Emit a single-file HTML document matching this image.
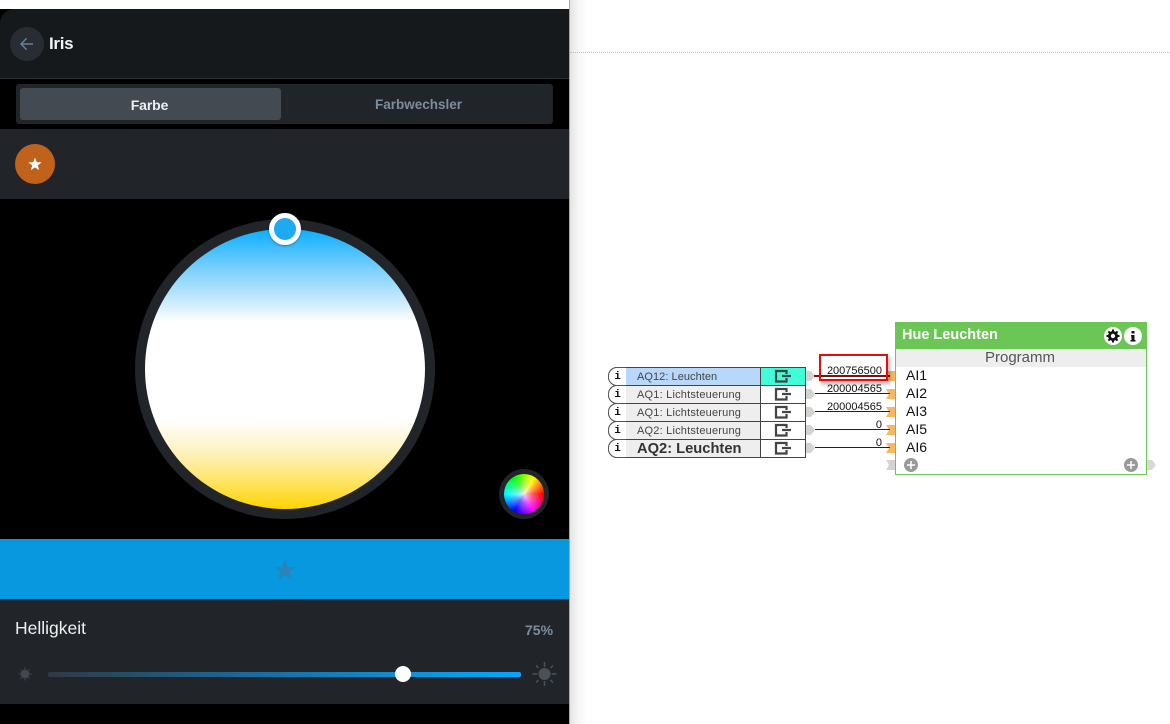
<!DOCTYPE html>
<html><head><meta charset="utf-8"><style>
html,body{margin:0;padding:0;width:1170px;height:724px;overflow:hidden;background:#fff;font-family:"Liberation Sans",sans-serif}
.a{position:absolute}
.t{position:absolute;white-space:nowrap;line-height:1}
.row{position:absolute;left:608px;width:197px;height:17px;border:1px solid #444;border-left:none;border-radius:9px 0 0 9px;background:#fff;box-sizing:content-box}
.row .cap{position:absolute;left:0;top:-1px;width:17px;height:17px;border:1px solid #555;border-right:none;border-radius:9px 0 0 9px;background:#fff;text-align:center;font:bold 11px/18px "Liberation Mono",monospace;color:#111}
.row .name{position:absolute;left:18px;top:0;width:135px;height:17px;background:#eee;border-right:1px solid #444;font:11px/18px "Liberation Sans",sans-serif;color:#444;padding-left:11px;box-sizing:border-box;letter-spacing:.2px;white-space:nowrap}
.val{position:absolute;font:11px/11px "Liberation Sans",sans-serif;color:#111;text-align:right;width:70px;left:812px}
.ai{position:absolute;left:906px;font:14px/14px "Liberation Sans",sans-serif;color:#111}
</style></head><body>
<!-- right shadow -->
<div class="a" style="left:570px;top:0;width:18px;height:724px;background:linear-gradient(90deg,#e4e4e4,#f7f7f7 50%,#fff)"></div>
<div class="a" style="left:569px;top:0;width:1px;height:724px;background:#a8a8a8"></div>
<div class="a" style="left:570px;top:52px;width:600px;height:0;border-top:1px dotted #bbb"></div>

<!-- panel -->
<div class="a" style="left:0;top:9px;width:569px;height:715px;background:#000;overflow:hidden">
  <div class="a" style="left:0;top:0;width:569px;height:69px;background:#16191c;border-top-left-radius:14px"></div>
  <div class="a" style="left:0;top:69px;width:569px;height:1px;background:#2b3035"></div>
  <div class="a" style="left:16px;top:75px;width:537px;height:40px;background:#212429;border-radius:3px"></div>
  <div class="a" style="left:20px;top:79px;width:261px;height:32px;background:#434a52;border-radius:3px"></div>
  <div class="a" style="left:0;top:120px;width:569px;height:70px;background:#212429"></div>
  <div class="a" style="left:0;top:530px;width:569px;height:60px;background:#0798e0"></div>
  <div class="a" style="left:0;top:590px;width:569px;height:105px;background:#212429"></div>
</div>
<div class="a" style="left:10px;top:27px;width:34px;height:34px;border-radius:50%;background:#282d33"></div>
<svg class="a" style="left:18px;top:35px" width="18" height="18" viewBox="0 0 18 18"><path d="M15 9H3.500M8.700 3.300L3 9l5.700 5.700" fill="none" stroke="#6b7f96" stroke-width="1.400"/></svg>
<div class="t" style="left:49px;top:35px;font-size:17px;font-weight:bold;color:#f2f3f4;letter-spacing:-.3px">Iris</div>
<div class="t" style="left:19px;width:261px;top:98px;text-align:center;font-size:14px;font-weight:bold;color:#eceef0;letter-spacing:-.1px">Farbe</div>
<div class="t" style="left:375px;top:98px;font-size:13.500px;font-weight:bold;color:#7f8c9b;">Farbwechsler</div>

<div class="a" style="left:15px;top:144px;width:40px;height:40px;border-radius:50%;background:#c1621b"></div>
<svg class="a" style="left:27px;top:156px" width="16" height="16" viewBox="0 0 16 16"><path d="M8 1.500L9.700 6.150 14.660 6.340 10.760 9.400 12.110 14.160 8 11.400 3.890 14.160 5.240 9.400 1.340 6.340 6.300 6.150z" fill="#fff"/></svg>

<!-- colour disc -->
<div class="a" style="left:135px;top:219px;width:300px;height:300px;border-radius:50%;background:#212429"></div>
<div class="a" style="left:145px;top:229px;width:280px;height:280px;border-radius:50%;background:linear-gradient(180deg,#0aaeff 0,#7fd1fc 15%,#d8f0fd 28%,#fff 33%,#fff 68%,#fdf2bd 80%,#fee35c 91%,#ffd400 100%)"></div>
<div class="a" style="left:269px;top:213px;width:32px;height:32px;box-sizing:border-box;border:5px solid #fff;border-radius:50%;background:#1ea9f0;box-shadow:0 1px 2px rgba(0,0,0,.35)"></div>

<!-- wheel -->
<div class="a" style="left:499px;top:469px;width:50px;height:50px;border-radius:50%;background:#212429"></div>
<div class="a" style="left:504px;top:474px;width:40px;height:40px;border-radius:50%;background:radial-gradient(circle,rgba(255,255,255,.85) 0,rgba(255,255,255,.35) 30%,rgba(255,255,255,0) 65%),conic-gradient(from 30deg,#ff0 0deg,#f00 60deg,#f0f 120deg,#00f 180deg,#0ff 240deg,#0f0 300deg,#ff0 360deg)"></div>

<!-- blue bar star -->
<svg class="a" style="left:273px;top:558px;filter:blur(.3px)" width="24" height="24" viewBox="0 0 24 24"><path d="M12 1.500L14.900 9 22.500 9.300 16.500 14 18.600 21.500 12 17.300 5.400 21.500 7.500 14 1.500 9.300 9.100 9z" fill="#2b83ba"/></svg>

<!-- brightness -->
<div class="t" style="left:15px;top:620px;font-size:17.500px;color:#eef0f2;">Helligkeit</div>
<div class="t" style="left:525px;top:623px;font-size:14px;font-weight:bold;color:#7f8c9b;">75%</div>
<div class="a" style="left:48px;top:672px;width:473px;height:5px;border-radius:2px;background:linear-gradient(90deg,#2f3a43 0,#1a6d9f 45%,#0a9be8 85%,#05a6ff 100%)"></div>
<div class="a" style="left:395px;top:666px;width:16px;height:16px;border-radius:50%;background:#fff"></div>
<svg class="a" style="left:15px;top:664px" width="20" height="20" viewBox="0 0 20 20"><circle cx="10" cy="10" r="4.500" fill="#414850"/><path d="M10 3.500V5M10 15V16.500M3.500 10H5M15 10H16.500M5.400 5.400L6.400 6.400M13.600 13.600L14.600 14.600M5.400 14.600L6.400 13.600M13.600 6.400L14.600 5.400" stroke="#414850" stroke-width="1.200"/></svg>
<svg class="a" style="left:530px;top:660px" width="28" height="28" viewBox="0 0 28 28"><circle cx="14.500" cy="14" r="6" fill="#4b5159"/><path d="M14.500 2V7M14.500 21V26M2.500 14H7.500M21.500 14H26.500M6 5.500L8.500 8M20.500 20L23 22.500M6 22.500L8.500 20M20.500 8L23 5.500" stroke="#4b5159" stroke-width="1.500"/></svg>

<!-- logic rows -->
<div class="row" style="top:367px"><div class="name" style="background:#b8d8fb;letter-spacing:.05px">AQ12: Leuchten</div><div class="a" style="left:153px;top:0;width:44px;height:17px;background:#3fffd8"></div><div class="cap">i</div></div>
<div class="row" style="top:385px"><div class="name">AQ1: Lichtsteuerung</div><div class="cap">i</div></div>
<div class="row" style="top:403px"><div class="name">AQ1: Lichtsteuerung</div><div class="cap">i</div></div>
<div class="row" style="top:421px"><div class="name">AQ2: Lichtsteuerung</div><div class="cap">i</div></div>
<div class="row" style="top:439px"><div class="name" style="font:bold 14.700px/18px 'Liberation Sans',sans-serif;color:#333;letter-spacing:0">AQ2: Leuchten</div><div class="cap">i</div></div>

<svg class="a" style="left:600px;top:350px" width="310" height="125" viewBox="600 350 310 125">
  <g fill="none" stroke="#444" stroke-width="2.200">
    <path d="M786.500 374V371H776V381.500H786.500V378M782 376H791"/>
    <path d="M786.500 392V389H776V399.500H786.500V396M782 394H791"/>
    <path d="M786.500 410V407H776V417.500H786.500V414M782 412H791"/>
    <path d="M786.500 428V425H776V435.500H786.500V432M782 430H791"/>
    <path d="M786.500 446V443H776V453.500H786.500V450M782 448H791"/>
  </g>
  <g fill="#d3d3cf">
    <path d="M806 371h5l4 5-4 5h-5z"/><path d="M806 389h5l4 5-4 5h-5z"/><path d="M806 407h5l4 5-4 5h-5z"/><path d="M806 425h5l4 5-4 5h-5z"/><path d="M806 443h5l4 5-4 5h-5z"/>
  </g>
  <g fill="#fbb760">
    <path d="M886 371h9v10h-9l3-5z"/><path d="M886 389h9v10h-9l3-5z"/><path d="M886 407h9v10h-9l3-5z"/><path d="M886 425h9v10h-9l3-5z"/><path d="M886 443h9v10h-9l3-5z"/>
  </g>
  <path d="M886 460h9v10h-9l3-5z" fill="#d3d3cf"/>
  <path d="M814 376H890" stroke="#7a1010" stroke-width="2"/>
  <g stroke="#700000" stroke-width="1">
    <path d="M815 393.500H890M815 411.500H890M815 429.500H890M815 447.500H890"/>
  </g>
</svg>
<div class="val" style="top:366px">200756500</div>
<div class="val" style="top:384px">200004565</div>
<div class="val" style="top:402px">200004565</div>
<div class="val" style="top:420px">0</div>
<div class="val" style="top:438px">0</div>
<div class="a" style="left:819px;top:354px;width:69px;height:27px;box-sizing:border-box;border:2px solid #e30d0d;box-shadow:2px 3px 4px rgba(0,0,0,.3)"></div>

<!-- block -->
<div class="a" style="left:895px;top:322px;width:252px;height:153px;box-sizing:border-box;border:1px solid #6cc655;background:#fff"></div>
<div class="a" style="left:895px;top:322px;width:252px;height:27px;background:#6cc655"></div>
<div class="t" style="left:902px;top:328px;font-size:14.500px;font-weight:bold;color:#fff;">Hue Leuchten</div>
<div class="a" style="left:896px;top:349px;width:250px;height:18px;background:#eee"></div>
<div class="t" style="left:895px;width:250px;text-align:center;top:350px;font-size:15px;color:#555;">Programm</div>
<div class="ai" style="top:368px">AI1</div>
<div class="ai" style="top:386px">AI2</div>
<div class="ai" style="top:404px">AI3</div>
<div class="ai" style="top:422px">AI5</div>
<div class="ai" style="top:440px">AI6</div>
<svg class="a" style="left:1100px;top:325px" width="60" height="150" viewBox="1100 325 60 150">
  <circle cx="1113" cy="336" r="9" fill="#fff"/>
  <circle cx="1113" cy="336" r="3.500" fill="none" stroke="#111" stroke-width="3"/>
  <path d="M1113 329.500v13M1106.500 336h13M1108.400 331.400l9.200 9.200M1108.400 340.600l9.200-9.200" stroke="#111" stroke-width="2"/>
  <circle cx="1113" cy="336" r="2.200" fill="#fff"/>
  <circle cx="1133" cy="336" r="9" fill="#fff"/>
  <path d="M1131.500 331h3v2.500h-3zM1131 335h3.500v5h1v1.500h-5V340h1v-3.500h-.5z" fill="#111"/>
  <circle cx="1131" cy="465" r="7" fill="#9a9a9a"/>
  <path d="M1131 461v8M1127 465h8" stroke="#fff" stroke-width="1.500"/>
  <path d="M1147 460h5l4 5-4 5h-5z" fill="#d8d8d4"/>
</svg>
<svg class="a" style="left:900px;top:455px" width="22" height="20" viewBox="900 455 22 20">
  <circle cx="911" cy="465" r="7" fill="#9a9a9a"/>
  <path d="M911 461v8M907 465h8" stroke="#fff" stroke-width="1.500"/>
</svg>
</body></html>
